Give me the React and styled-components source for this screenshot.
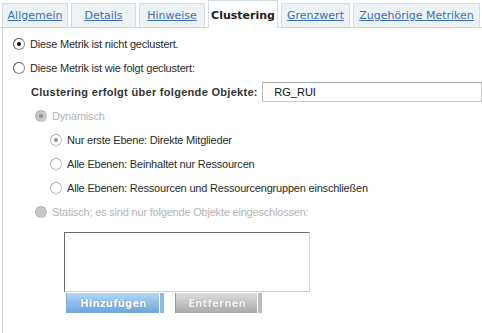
import React from "react";
import styled, { createGlobalStyle } from "styled-components";

const Global = createGlobalStyle`
  html, body { margin: 0; padding: 0; background: #fff; }
  body { width: 482px; height: 333px; overflow: hidden; }
`;

const Page = styled.div`
  width: 482px;
  height: 333px;
  background: #fff;
  font-family: "Liberation Sans", Arial, sans-serif;
  font-size: 11px;
  color: #2b2b2b;
`;

const TabBar = styled.div`
  display: flex;
  align-items: flex-end;
  gap: 3px;
  height: 28px;
  padding-left: 2px;
  border-bottom: 1px solid #cfd8df;
  box-sizing: border-box;
`;

const Tab = styled.div`
  width: ${(p) => p.w}px;
  height: ${(p) => (p.active ? 28 : 24)}px;
  margin-bottom: ${(p) => (p.active ? -1 : 0)}px;
  box-sizing: border-box;
  display: flex;
  align-items: center;
  justify-content: center;
  padding-top: ${(p) => (p.active ? 3 : 0)}px;
  background: ${(p) => (p.active ? "#fff" : "#edf2f5")};
  border: 1px solid #d3dce3;
  border-bottom: ${(p) => (p.active ? "1px solid #fff" : "none")};
  font-family: "DejaVu Sans", Verdana, sans-serif;
  font-size: 11px;
  font-weight: ${(p) => (p.active ? "bold" : "normal")};
  color: ${(p) => (p.active ? "#222" : "#3a6fb5")};
  text-decoration: ${(p) => (p.active ? "none" : "underline")};
  white-space: nowrap;
`;

const Panel = styled.div`
  margin-left: 2px;
  height: 305px;
  border-left: 1px solid #cfd8df;
  padding: 4px 0 0 10px;
  box-sizing: border-box;
  display: flex;
  flex-direction: column;
  letter-spacing: -0.2px;
`;

const Row = styled.div`
  display: flex;
  align-items: center;
  height: 24px;
  padding-left: ${(p) => p.indent || 0}px;
  color: ${(p) => (p.dim ? "#b4b4b4" : "#2b2b2b")};
  white-space: nowrap;
`;

const Radio = styled.span`
  width: 12px;
  height: 12px;
  box-sizing: border-box;
  border-radius: 50%;
  margin-right: 5px;
  flex: none;
  display: flex;
  align-items: center;
  justify-content: center;
  border: 1px solid ${(p) => (p.disabled ? "#c4c4c4" : "#8a8a8a")};
  border-top-color: ${(p) => (p.disabled ? "#b0b0b0" : "#555")};
  border-left-color: ${(p) => (p.disabled ? "#b0b0b0" : "#555")};
  background: ${(p) => (p.filled ? "#c8c8c8" : "#fff")};
  &::after {
    content: "";
    display: ${(p) => (p.checked ? "block" : "none")};
    width: 4px;
    height: 4px;
    border-radius: 50%;
    background: ${(p) => (p.disabled ? "#8f8f8f" : "#111")};
  }
`;

const Label = styled.span`
  font-weight: bold;
  color: #333;
  padding-left: 2px;
  width: 234px;
  letter-spacing: 0.3px;
`;

const TextInput = styled.div`
  width: 222px;
  height: 20px;
  box-sizing: border-box;
  border: 1px solid #c9c9c9;
  border-top-color: #a8a8a8;
  border-left-color: #bdbdbd;
  padding-left: 11px;
  display: flex;
  align-items: center;
  color: #111;
  font-size: 11px;
  letter-spacing: 0;
`;

const ListBox = styled.div`
  margin: 8px 0 0 51px;
  width: 246px;
  height: 60px;
  box-sizing: border-box;
  border: 1px solid #d0d0d0;
  border-top-color: #6b6b6b;
  border-left-color: #6b6b6b;
  background: #fff;
`;

const Buttons = styled.div`
  display: flex;
  gap: 11px;
  margin: 1px 0 0 53px;
`;

const Button = styled.div`
  width: ${(p) => p.w}px;
  height: 20px;
  box-sizing: border-box;
  display: flex;
  align-items: center;
  justify-content: center;
  padding-right: 4px;
  font-family: "DejaVu Sans", Verdana, sans-serif;
  font-size: 10px;
  font-weight: bold;
  letter-spacing: 0.2px;
  color: ${(p) => (p.grey ? "#f4f4f4" : "#fff")};
  text-shadow: 0 0 1px ${(p) => (p.grey ? "#777" : "#3d6c9c")};
  background: ${(p) =>
    p.grey
      ? "linear-gradient(#dcdcdc, #c4c4c4 50%, #a9a9a9)"
      : "linear-gradient(#b4d6f3, #8fbde9 50%, #6ea4dc)"};
  box-shadow: inset -4px 0 0 ${(p) => (p.grey ? "#bdbdbd" : "#8cbbe6")},
    inset -5px 0 0 #fff;
  border-left: 1px solid ${(p) => (p.grey ? "#9a9a9a" : "#7eaee0")};
`;

const tabs = [
  ["Allgemein", 66],
  ["Details", 65],
  ["Hinweise", 66],
  ["Clustering", 70, true],
  ["Grenzwert", 69],
  ["Zugehörige Metriken", 127],
];

const App = () => {
  return (
    <Page>
      <Global />
      <TabBar>
        {tabs.map(([t, w, active]) => (
          <Tab key={t} w={w} active={active}>
            {t}
          </Tab>
        ))}
      </TabBar>
      <Panel>
        <Row>
          <Radio checked />
          Diese Metrik ist nicht geclustert.
        </Row>
        <Row>
          <Radio />
          Diese Metrik ist wie folgt geclustert:
        </Row>
        <Row indent={16}>
          <Label>Clustering erfolgt über folgende Objekte:</Label>
          <TextInput>RG_RUI</TextInput>
        </Row>
        <Row indent={22} dim>
          <Radio disabled filled checked />
          Dynamisch
        </Row>
        <Row indent={37}>
          <Radio disabled checked />
          Nur erste Ebene: Direkte Mitglieder
        </Row>
        <Row indent={37}>
          <Radio disabled />
          Alle Ebenen: Beinhaltet nur Ressourcen
        </Row>
        <Row indent={37}>
          <Radio disabled />
          Alle Ebenen: Ressourcen und Ressourcengruppen einschließen
        </Row>
        <Row indent={22} dim>
          <Radio disabled filled />
          Statisch; es sind nur folgende Objekte eingeschlossen:
        </Row>
        <ListBox />
        <Buttons>
          <Button w={98}>Hinzufügen</Button>
          <Button w={87} grey>
            Entfernen
          </Button>
        </Buttons>
      </Panel>
    </Page>
  );
};

export default App;
